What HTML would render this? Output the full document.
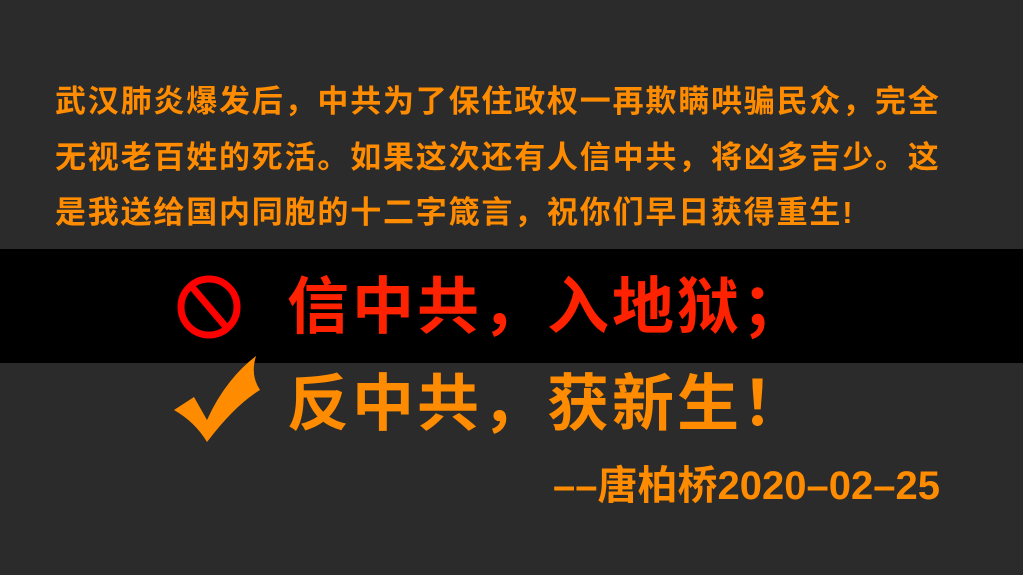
<!DOCTYPE html>
<html><head><meta charset="utf-8"><style>
html,body{margin:0;padding:0}
body{width:1023px;height:575px;background:#2b2b2b;position:relative;overflow:hidden;font-family:"Liberation Sans","Noto Sans CJK SC",sans-serif;font-weight:bold}
.p{position:absolute;left:55px;top:74px;width:960px;color:#ff8c00;font-size:31px;letter-spacing:1.8px;line-height:55.5px;white-space:nowrap}
.band{position:absolute;left:0;top:249px;width:1023px;height:114px;background:#000}
.big{position:absolute;left:287px;font-size:62px;letter-spacing:3px;white-space:nowrap;line-height:1}
.sig{position:absolute;right:83px;top:466px;color:#ff8c00;font-size:40px;white-space:nowrap;line-height:1}
</style></head><body>
<div class="p">武汉肺炎爆发后，中共为了保住政权一再欺瞒哄骗民众，完全<br>无视老百姓的死活。如果这次还有人信中共，将凶多吉少。这<br>是我送给国内同胞的十二字箴言，祝你们早日获得重生!</div>
<div class="band"></div>
<svg style="position:absolute;left:174px;top:272px" width="70" height="70" viewBox="0 0 70 70"><circle cx="35" cy="35" r="28" fill="none" stroke="#ff0000" stroke-width="7"/><line x1="18" y1="15" x2="52" y2="55" stroke="#ff0000" stroke-width="7"/></svg>
<div class="big" style="top:277px;color:#ff2200">信中共，入地狱；</div>
<svg style="position:absolute;left:170px;top:350px" width="95" height="95" viewBox="0 0 95 95"><path d="M4 60 L24 47 L37 70 Q55 30 86 6 Q80 25 90 40 Q65 55 37 92 Q25 72 4 60 Z" fill="#ff8c00"/></svg>
<div class="big" style="top:374px;color:#ff8c00">反中共，获新生！</div>
<div class="sig">––唐柏桥2020–02–25</div>
</body></html>
